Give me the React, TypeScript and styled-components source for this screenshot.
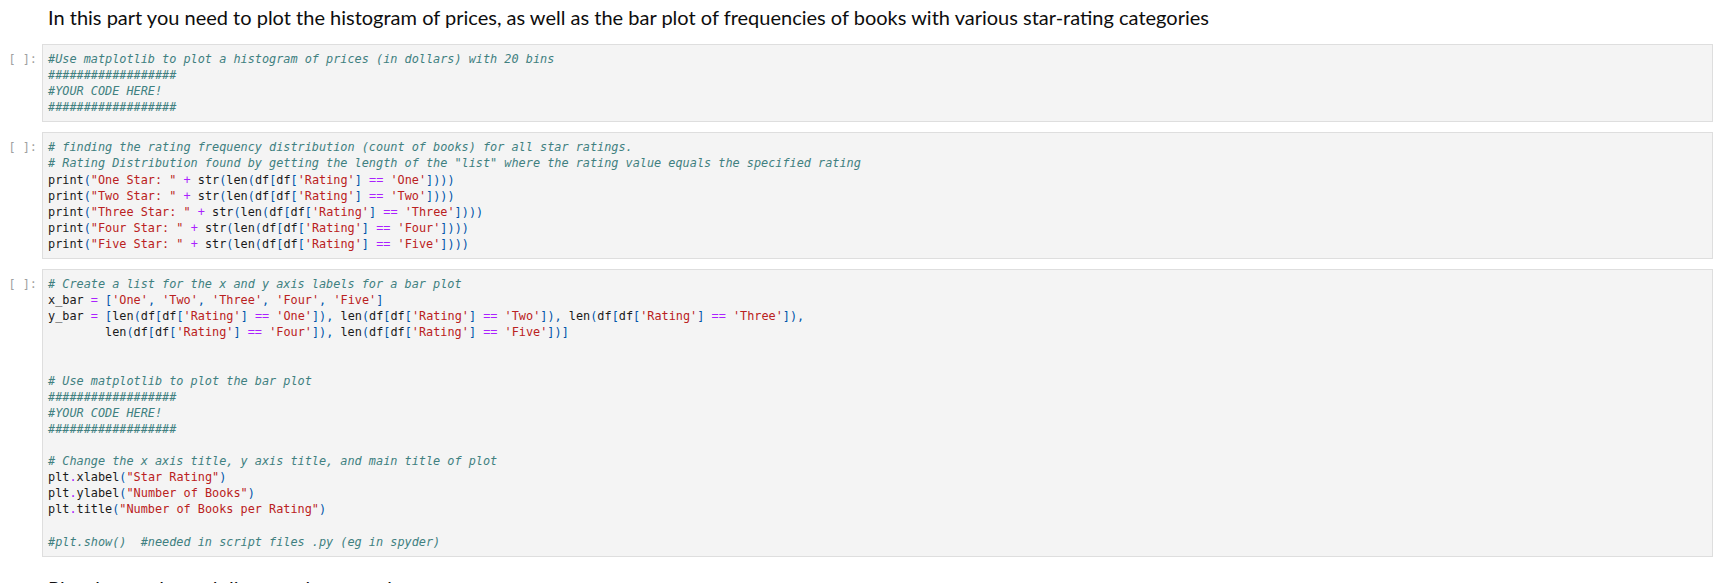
import React from "react";
import styled, { createGlobalStyle } from "styled-components";

const Global = createGlobalStyle`
  html, body { margin: 0; padding: 0; background: #ffffff; }
  body { width: 1732px; height: 583px; overflow: hidden; }
`;

const Page = styled.div`
  display: flex;
  flex-direction: column;
  padding: 5px 19px 0 0;
`;

const Heading = styled.div`
  font-family: Lato, "Open Sans", sans-serif;
  font-size: 20px;
  line-height: 24px;
  color: #0d0d0d;
  padding-left: 48px;
  margin-bottom: 15px;
  white-space: nowrap;
`;

const Cells = styled.div`
  display: flex;
  flex-direction: column;
  gap: 10px;
`;

const Cell = styled.div`
  display: flex;
  flex-direction: row;
  align-items: flex-start;
`;

const Prompt = styled.div`
  width: 42px;
  box-sizing: border-box;
  padding: 7px 5px 0 0;
  text-align: right;
  font-family: "DejaVu Sans Mono", "Liberation Mono", monospace;
  font-size: 11.85px;
  line-height: 16px;
  color: #a0a0a0;
  white-space: pre;
`;

const InputArea = styled.div`
  flex: 1;
  background: #f4f4f4;
  border: 1px solid #dedede;
  padding: 6px 5px;
  font-family: "DejaVu Sans Mono", "Liberation Mono", monospace;
  font-size: 11.85px;
  line-height: 16.1px;
  color: #212121;
`;

const Line = styled.div`
  white-space: pre;
  height: 16.1px;
`;

const Tok = styled.span<{ $kind: string }>`
  color: ${(p) =>
    p.$kind === "comment"
      ? "#408080"
      : p.$kind === "string"
      ? "#ba2121"
      : p.$kind === "op"
      ? "#aa22ff"
      : p.$kind === "punc"
      ? "#0055aa"
      : "#1a1a1a"};
  font-style: ${(p) => (p.$kind === "comment" ? "italic" : "normal")};
`;

const Trailing = styled.div`
  font-family: Lato, "Open Sans", sans-serif;
  font-size: 20px;
  line-height: 24px;
  color: #111111;
  padding-left: 48px;
  margin-top: 19px;
  white-space: nowrap;
`;

const tokenRe = /(#.*$)|('[^']*'|"[^"]*")|(==|=|\+|\.)|([\[\]\(\),])|([^#'"=+.\[\](),]+)/g;

function tokenize(line: string) {
  const out: { kind: string; text: string }[] = [];
  let m: RegExpExecArray | null;
  tokenRe.lastIndex = 0;
  while ((m = tokenRe.exec(line)) !== null) {
    if (m[0] === "") break;
    const kind = m[1] ? "comment" : m[2] ? "string" : m[3] ? "op" : m[4] ? "punc" : "name";
    out.push({ kind, text: m[0] });
  }
  return out;
}

const cells: string[][] = [
  [
    "#Use matplotlib to plot a histogram of prices (in dollars) with 20 bins",
    "##################",
    "#YOUR CODE HERE!",
    "##################",
  ],
  [
    "# finding the rating frequency distribution (count of books) for all star ratings.",
    '# Rating Distribution found by getting the length of the "list" where the rating value equals the specified rating',
    "print(\"One Star: \" + str(len(df[df['Rating'] == 'One'])))",
    "print(\"Two Star: \" + str(len(df[df['Rating'] == 'Two'])))",
    "print(\"Three Star: \" + str(len(df[df['Rating'] == 'Three'])))",
    "print(\"Four Star: \" + str(len(df[df['Rating'] == 'Four'])))",
    "print(\"Five Star: \" + str(len(df[df['Rating'] == 'Five'])))",
  ],
  [
    "# Create a list for the x and y axis labels for a bar plot",
    "x_bar = ['One', 'Two', 'Three', 'Four', 'Five']",
    "y_bar = [len(df[df['Rating'] == 'One']), len(df[df['Rating'] == 'Two']), len(df[df['Rating'] == 'Three']),",
    "        len(df[df['Rating'] == 'Four']), len(df[df['Rating'] == 'Five'])]",
    "",
    "",
    "# Use matplotlib to plot the bar plot",
    "##################",
    "#YOUR CODE HERE!",
    "##################",
    "",
    "# Change the x axis title, y axis title, and main title of plot",
    'plt.xlabel("Star Rating")',
    'plt.ylabel("Number of Books")',
    'plt.title("Number of Books per Rating")',
    "",
    "#plt.show()  #needed in script files .py (eg in spyder)",
  ],
];

export default function App() {
  return (
    <>
      <Global />
      <Page>
        <Heading>
          In this part you need to plot the histogram of prices, as well as the bar plot of frequencies of books with
          various star-rating categories
        </Heading>
        <Cells>
          {cells.map((lines, ci) => (
            <Cell key={ci}>
              <Prompt>[ ]:</Prompt>
              <InputArea>
                {lines.map((line, li) => (
                  <Line key={li}>
                    {tokenize(line).map((t, ti) => (
                      <Tok key={ti} $kind={t.kind}>
                        {t.text}
                      </Tok>
                    ))}
                  </Line>
                ))}
              </InputArea>
            </Cell>
          ))}
        </Cells>
        <Trailing>Plot the results and discuss what you observe</Trailing>
      </Page>
    </>
  );
}
